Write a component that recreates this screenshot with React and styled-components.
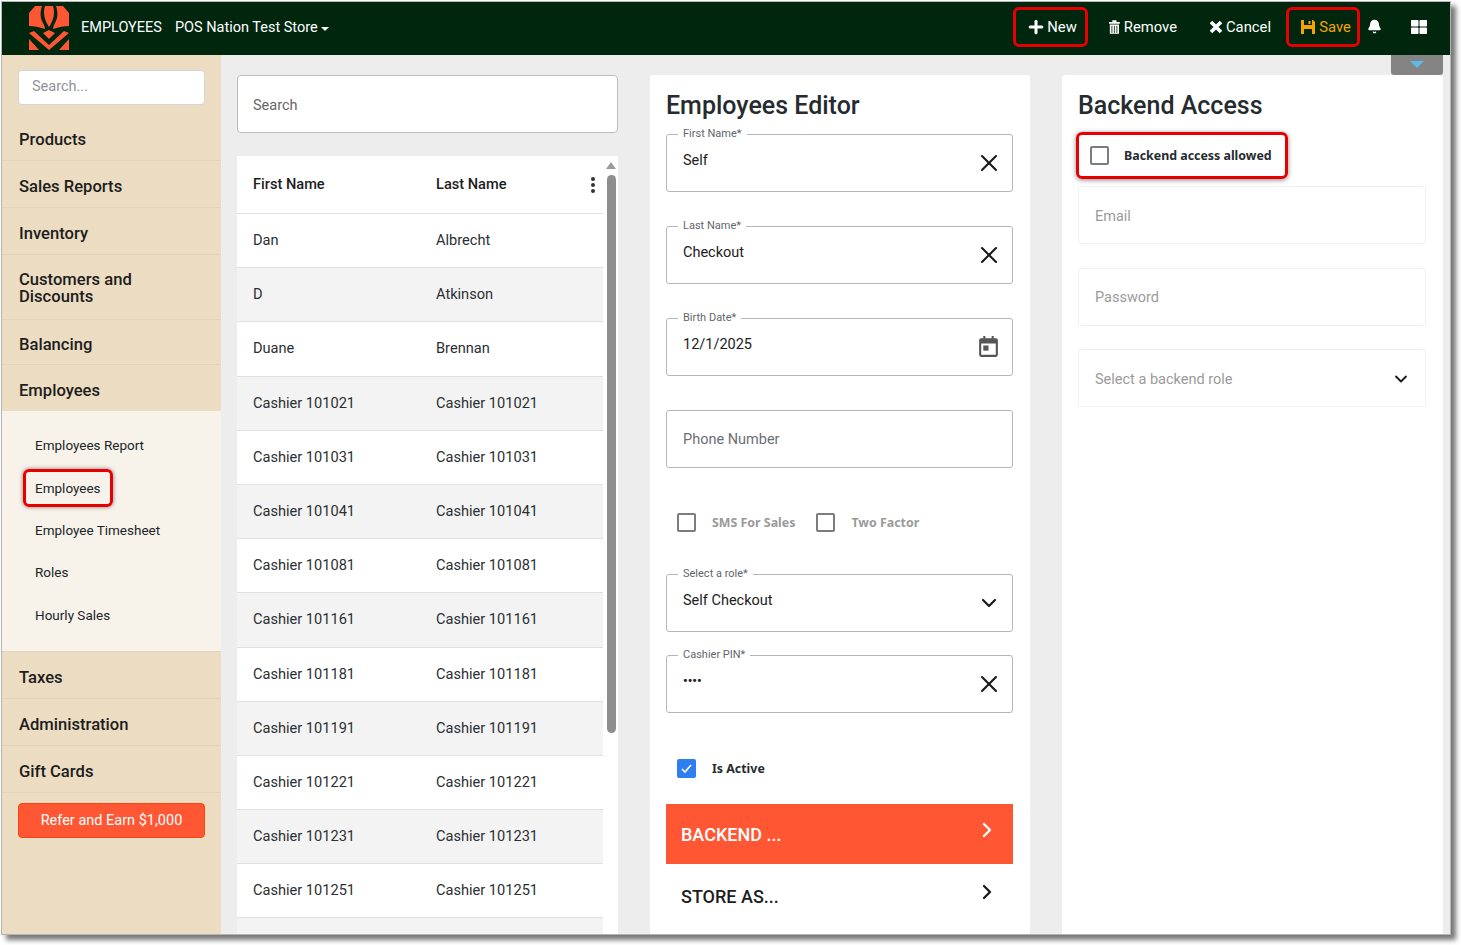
import React from "react";
import styled, { createGlobalStyle } from "styled-components";
import { X, ChevronDown, ChevronRight, Plus, Bell } from "lucide-react";
import { FaThLarge } from "react-icons/fa";

const GlobalStyle = createGlobalStyle`
  html, body {
    margin: 0;
    padding: 0;
    background: #fff;
    font-family: Roboto, "Liberation Sans", sans-serif;
    color: #212529;
  }
  * { box-sizing: border-box; }
`;

const Page = styled.div`
  width: 1461px;
  height: 945px;
  padding: 1px 10px 10px 1px;
  overflow: hidden;
`;

const Frame = styled.div`
  width: 1450px;
  height: 934px;
  border: 1px solid #b5b5b5;
  box-shadow: 5px 5px 5px #777;
  background: #ecedec;
  display: flex;
  flex-direction: column;
  overflow: hidden;
`;

const Header = styled.header`
  height: 53px;
  flex: none;
  background: #00260e;
  color: #fff;
  display: flex;
  align-items: center;
  padding: 0 0 4px 26px;
  font-size: 14.5px;
`;

const Logo = styled.svg`
  width: 42px;
  height: 44px;
  margin: 2px 11px 0 0;
`;

const HeaderTitle = styled.span`
  margin: 2px 13px 0 0;
`;

const StoreName = styled.span`
  margin-top: 2px;
  display: flex;
  align-items: center;
  gap: 3px;
  &::after {
    content: "";
    margin-top: 2px;
    border-left: 4px solid transparent;
    border-right: 4px solid transparent;
    border-top: 4px solid #fff;
  }
`;

const Actions = styled.div`
  margin-left: auto;
  display: flex;
  align-items: center;
  font-size: 14.8px;
`;

const ActionButton = styled.div`
  height: 40px;
  width: ${(p) => p.$w}px;
  margin-right: ${(p) => p.$mr || 0}px;
  padding: 1px 0 0 ${(p) => p.$pl || 0}px;
  display: flex;
  align-items: center;
  justify-content: center;
  gap: ${(p) => (p.$gap === undefined ? 4 : p.$gap)}px;
  color: ${(p) => (p.$orange ? "#f5a300" : "#fff")};
  border: 3px solid ${(p) => (p.$marked ? "#e60000" : "transparent")};
  border-radius: 6px;
`;

const IconButton = styled.div`
  display: flex;
  align-items: center;
  justify-content: center;
  width: ${(p) => p.$w}px;
`;

const Body = styled.div`
  flex: 1;
  display: flex;
  min-height: 0;
`;

const Sidebar = styled.aside`
  width: 219px;
  flex: none;
  background: #ebdcc2;
  padding-top: 15px;
`;

const SideSearch = styled.div`
  height: 35px;
  margin: 0 16px 9px 16px;
  padding: 0 0 3px 13px;
  display: flex;
  align-items: center;
  background: #fff;
  border: 1px solid #d5d5d5;
  border-radius: 4px;
  color: #8f949a;
  font-size: 14.5px;
`;

const NavItem = styled.div`
  height: ${(p) => p.$h || 47}px;
  padding: ${(p) => (p.$two ? "16px" : "5px")} 8px 0 17px;
  display: flex;
  align-items: ${(p) => (p.$two ? "flex-start" : "center")};
  font-size: 16.6px;
  line-height: 17px;
  font-weight: 500;
  color: #1d1d1d;
  border-bottom: ${(p) => (p.$flat ? "none" : "1px solid #e2d3b9")};
`;

const SubNav = styled.div`
  height: 241px;
  padding-top: 13px;
  background: #f7f3ea;
  border-bottom: 1px solid #e2d3b9;
`;

const SubItem = styled.div`
  height: 42.4px;
  padding-left: 33px;
  display: flex;
  align-items: center;
  font-size: 13.5px;
  color: #212529;
`;

const SubItemMark = styled.span`
  margin-left: -12px;
  padding: 0 9px;
  height: 38px;
  display: flex;
  align-items: center;
  border: 3px solid #e60000;
  border-radius: 6px;
  box-shadow: 0 0 4px #777;
`;

const ReferButton = styled.div`
  height: 35px;
  margin: 10px 16px 0;
  display: flex;
  align-items: center;
  justify-content: center;
  background: #ff5733;
  border: 1px solid #f4470f;
  border-radius: 4px;
  color: #fff;
  font-size: 14.5px;
`;

const Content = styled.main`
  flex: 1;
  display: flex;
  padding: 20px 8px 0 16px;
  position: relative;
`;

const ListColumn = styled.section`
  width: 381px;
  margin-right: 32px;
  display: flex;
  flex-direction: column;
  min-height: 0;
`;

const ListSearch = styled.div`
  height: 58px;
  flex: none;
  margin-bottom: 23px;
  padding: 2px 0 0 15px;
  display: flex;
  align-items: center;
  background: #fff;
  border: 1px solid #bdbdbd;
  border-radius: 4px;
  color: #666;
  font-size: 14.5px;
`;

const TableWrap = styled.div`
  flex: 1;
  display: flex;
  background: #fff;
  min-height: 0;
  overflow: hidden;
`;

const Table = styled.div`
  width: 366px;
  flex: none;
`;

const Row = styled.div`
  height: ${(p) => p.$h || 54.2}px;
  display: grid;
  grid-template-columns: 183px 1fr;
  align-items: center;
  padding: 0 0 1px 16px;
  font-size: 14.6px;
  font-weight: ${(p) => (p.$head ? 500 : 400)};
  color: ${(p) => (p.$head ? "#1d1d1d" : "#2b2f33")};
  background: ${(p) => (p.$alt ? "#f3f3f3" : "#fff")};
  border-bottom: 1px solid #e0e0e0;
  position: relative;
`;

const MenuDots = styled.svg`
  position: absolute;
  right: 6px;
  top: 20px;
  width: 8px;
  height: 18px;
`;

const ScrollTrack = styled.div`
  flex: 1;
  padding-top: 6px;
  display: flex;
  flex-direction: column;
  align-items: center;
  &::before {
    content: "";
    border-left: 5px solid transparent;
    border-right: 5px solid transparent;
    border-bottom: 7px solid #9a9a9a;
    margin-bottom: 6px;
  }
`;

const ScrollThumb = styled.div`
  width: 9px;
  height: 558px;
  margin-left: 1px;
  background: #8e8e8e;
  border-radius: 5px;
`;

const Card = styled.section`
  width: ${(p) => p.$w}px;
  margin-right: ${(p) => p.$mr || 0}px;
  background: #fff;
  border-radius: 3px 3px 0 0;
  padding: 16px 17px 0 16px;
  overflow: hidden;
`;

const CardTitle = styled.h2`
  margin: 0 0 14px;
  height: 29px;
  font-size: 25px;
  line-height: 29px;
  font-weight: 500;
  color: #262b30;
`;

const Field = styled.div`
  position: relative;
  height: 58px;
  margin-bottom: ${(p) => p.$mb}px;
  padding: 17px 16px 0;
  border: 1px solid #b4b6b8;
  border-radius: 3px;
  font-size: 14.5px;
  color: #212121;
  display: flex;
  justify-content: space-between;
`;

const FloatLabel = styled.label`
  position: absolute;
  left: 11px;
  top: -8px;
  padding: 0 5px;
  background: #fff;
  font-size: 11px;
  line-height: 13px;
  color: #62666b;
`;

const Placeholder = styled.span`
  margin-top: 3px;
  color: #6b6f74;
`;

const FieldIcon = styled.span`
  width: 28px;
  height: 22px;
  margin-right: -7px;
  display: flex;
  align-items: center;
  justify-content: center;
`;

const CalendarSvg = styled.svg`
  width: 25px;
  height: 25px;
  margin: -2px 2px 0 0;
`;

const PinDots = styled.span`
  margin-top: 3px;
  font-size: 13px;
  font-weight: 700;
  line-height: 10px;
`;

const CheckRow = styled.div`
  height: ${(p) => p.$h}px;
  margin-bottom: ${(p) => p.$mb}px;
  padding-left: 11px;
  display: flex;
  align-items: center;
`;

const Box = styled.span`
  width: 19px;
  height: 19px;
  flex: none;
  border: 2px solid ${(p) => (p.$checked ? "#2f7ef0" : "#7d7d7d")};
  border-radius: 2px;
  background: ${(p) => (p.$checked ? "#2f7ef0" : "#fff")};
  display: flex;
  align-items: center;
  justify-content: center;
`;

const CheckLabel = styled.span`
  margin-left: ${(p) => p.$ml || 16}px;
  margin-right: ${(p) => p.$mr || 0}px;
  font-family: "Noto Sans", Roboto, sans-serif;
  font-size: 12.4px;
  font-weight: 700;
  color: ${(p) => (p.$muted ? "#9a9a9a" : "#262b30")};
`;

const Accordion = styled.div`
  height: ${(p) => (p.$active ? 60 : 64)}px;
  padding: 0 21px 0 15px;
  display: flex;
  align-items: center;
  justify-content: space-between;
  background: ${(p) => (p.$active ? "#ff5733" : "#fff")};
  color: ${(p) => (p.$active ? "#fff" : "#1d1d1d")};
  font-size: 18px;
  font-weight: 500;
  svg { margin: -8px -7px 0 0; }
`;

const BackendMark = styled.div`
  width: 212px;
  height: 47px;
  margin: -2px 0 7px -2px;
  padding-left: 11px;
  display: flex;
  align-items: center;
  border: 3px solid #e60000;
  border-radius: 6px;
  box-shadow: 0 1px 5px #888;
`;

const BackendField = styled.div`
  height: 58px;
  margin-bottom: 23.5px;
  padding: 2px 14px 0 16px;
  display: flex;
  align-items: center;
  justify-content: space-between;
  border: 1px solid #f0f0f0;
  border-radius: 3px;
  font-size: 14.5px;
  color: #9b9b9b;
`;

const PanelTab = styled.div`
  position: absolute;
  top: 0;
  right: 8px;
  width: 52px;
  height: 20px;
  background: #848484;
  border-radius: 0 0 3px 3px;
  display: flex;
  justify-content: center;
  padding-top: 6px;
  &::after {
    content: "";
    height: 0;
    border-left: 7px solid transparent;
    border-right: 7px solid transparent;
    border-top: 7px solid #5bbce4;
  }
`;

const employees = [
  ["Dan", "Albrecht"],
  ["D", "Atkinson"],
  ["Duane", "Brennan"],
  ...[101021, 101031, 101041, 101081, 101161, 101181, 101191, 101221, 101231, 101251].map(
    (n) => [`Cashier ${n}`, `Cashier ${n}`]
  ),
];

const LogoMark = () => (
  <Logo viewBox="0 0 42 44">
    <path fill="#ff5733" d="M7 0h7c-2 6-2 12 1 17 1 2 2 4 2 6-6-2-11-3-16-3V7z" />
    <path fill="#ff5733" d="M17 0h8c2 6 1 14-4 21-5-7-6-15-4-21z" />
    <path fill="#ff5733" d="M28 0h7l6 7v13c-5 0-10 1-16 3 0-2 1-4 2-6 3-5 3-11 1-17z" />
    <path fill="#ff5733" d="M15 27l6-3 6 3-6 6z" />
    <path fill="#ff5733" d="M1 27l5-2 15 14 15-14 5 2-20 17z" />
    <path fill="#ff5733" d="M1 33l10 11H1zM41 33v11H31z" />
  </Logo>
);

const TrashIcon = () => (
  <svg width="13" height="16" viewBox="0 0 13 16">
    <path fill="#fff" d="M0 2h4V0h5v2h4v2H0zM1 5h11v11H1z" />
    <path stroke="#00260e" strokeWidth="1" d="M3.5 6.5V15M6.5 6.5V15M9.5 6.5V15" />
  </svg>
);

const CancelIcon = () => (
  <svg width="14" height="14" viewBox="0 0 14 14">
    <path stroke="#fff" strokeWidth="3.6" d="M2 2l10 10M12 2L2 12" />
  </svg>
);

const SaveIcon = () => (
  <svg width="14" height="14" viewBox="0 0 14 14">
    <path
      fill="#f5a300"
      fillRule="evenodd"
      d="M0 0h12l2 2v12H0zM3 0v5h8V0zM3 9v5h8V9z"
    />
    <path fill="#f5a300" d="M7.5 1h2v3h-2z" />
  </svg>
);

const CalendarIcon = () => (
  <CalendarSvg viewBox="0 0 24 24">
    <path
      fill="#555"
      fillRule="evenodd"
      d="M7 2v2H5a2 2 0 0 0-2 2v14a2 2 0 0 0 2 2h14a2 2 0 0 0 2-2V6a2 2 0 0 0-2-2h-2V2h-2v2H9V2zM5 9h14v11H5z"
    />
    <path fill="#555" d="M7 11h5v5H7z" />
  </CalendarSvg>
);

const Check = ({ checked }) => (
  <Box $checked={checked}>
    {checked && (
      <svg width="13" height="13" viewBox="0 0 13 13">
        <path d="M2 7l3 3 6-7" fill="none" stroke="#fff" strokeWidth="1.6" />
      </svg>
    )}
  </Box>
);

const TextField = ({ label, value, mb, icon }) => (
  <Field $mb={mb}>
    {label && <FloatLabel>{label}</FloatLabel>}
    {value}
    {icon && <FieldIcon>{icon}</FieldIcon>}
  </Field>
);

const clearIcon = <X size={28} color="#1a1a1a" strokeWidth={1.8} />;
const navAbove = ["Products", "Sales Reports", "Inventory"];
const navBelow = ["Taxes", "Administration", "Gift Cards"];
const subItems = ["Employees Report", "Employees", "Employee Timesheet", "Roles", "Hourly Sales"];

export default function App() {
  return (
    <Page>
      <GlobalStyle />
      <Frame>
        <Header>
          <LogoMark />
          <HeaderTitle>EMPLOYEES</HeaderTitle>
          <StoreName>POS Nation Test Store</StoreName>
          <Actions>
            <ActionButton $w={75} $mr={18} $gap={1} $pl={2} $marked>
              <Plus size={20} strokeWidth={3.6} />
              New
            </ActionButton>
            <ActionButton $w={74} $mr={25}>
              <TrashIcon />
              Remove
            </ActionButton>
            <ActionButton $w={70} $mr={11} $gap={3}>
              <CancelIcon />
              Cancel
            </ActionButton>
            <ActionButton $w={74} $pl={6} $orange $marked>
              <SaveIcon />
              Save
            </ActionButton>
            <IconButton $w={28}>
              <Bell size={15} fill="#fff" />
            </IconButton>
            <IconButton $w={62}>
              <FaThLarge size={16} />
            </IconButton>
          </Actions>
        </Header>
        <Body>
          <Sidebar>
            <SideSearch>Search...</SideSearch>
            {navAbove.map((n) => (
              <NavItem key={n}>{n}</NavItem>
            ))}
            <NavItem $h={65} $two>
              Customers and
              <br />
              Discounts
            </NavItem>
            <NavItem $h={45}>Balancing</NavItem>
            <NavItem $h={46} $flat>Employees</NavItem>
            <SubNav>
              {subItems.map((s) => (
                <SubItem key={s}>
                  {s === "Employees" ? <SubItemMark>{s}</SubItemMark> : s}
                </SubItem>
              ))}
            </SubNav>
            {navBelow.map((n) => (
              <NavItem key={n}>{n}</NavItem>
            ))}
            <ReferButton>Refer and Earn $1,000</ReferButton>
          </Sidebar>
          <Content>
            <ListColumn>
              <ListSearch>Search</ListSearch>
              <TableWrap>
                <Table>
                  <Row $head $h={58}>
                    <span>First Name</span>
                    <span>Last Name</span>
                    <MenuDots viewBox="0 0 8 18">
                      <circle cx="4" cy="3" r="2" fill="#333" />
                      <circle cx="4" cy="9" r="2" fill="#333" />
                      <circle cx="4" cy="15" r="2" fill="#333" />
                    </MenuDots>
                  </Row>
                  {employees.map(([first, last], i) => (
                    <Row key={first + i} $alt={i % 2 === 1}>
                      <span>{first}</span>
                      <span>{last}</span>
                    </Row>
                  ))}
                  <Row $alt />
                </Table>
                <ScrollTrack>
                  <ScrollThumb />
                </ScrollTrack>
              </TableWrap>
            </ListColumn>
            <Card $w={380} $mr={32}>
              <CardTitle>Employees Editor</CardTitle>
              <TextField label="First Name*" value="Self" mb={34} icon={clearIcon} />
              <TextField label="Last Name*" value="Checkout" mb={34} icon={clearIcon} />
              <TextField label="Birth Date*" value="12/1/2025" mb={34} icon={<CalendarIcon />} />
              <TextField value={<Placeholder>Phone Number</Placeholder>} mb={22} />
              <CheckRow $h={64} $mb={20}>
                <Check />
                <CheckLabel $muted $mr={21}>SMS For Sales</CheckLabel>
                <Check />
                <CheckLabel $muted>Two Factor</CheckLabel>
              </CheckRow>
              <TextField
                label="Select a role*"
                value="Self Checkout"
                mb={23}
                icon={<ChevronDown size={24} color="#1a1a1a" strokeWidth={2.2} />}
              />
              <TextField
                label="Cashier PIN*"
                value={<PinDots>••••</PinDots>}
                mb={32}
                icon={clearIcon}
              />
              <CheckRow $h={46} $mb={13}>
                <Check checked />
                <CheckLabel>Is Active</CheckLabel>
              </CheckRow>
              <Accordion $active>
                BACKEND ...
                <ChevronRight size={24} strokeWidth={2.4} />
              </Accordion>
              <Accordion>
                STORE AS...
                <ChevronRight size={24} strokeWidth={2.4} />
              </Accordion>
            </Card>
            <Card $w={381}>
              <CardTitle>Backend Access</CardTitle>
              <BackendMark>
                <Check />
                <CheckLabel $ml={15}>Backend access allowed</CheckLabel>
              </BackendMark>
              <BackendField>Email</BackendField>
              <BackendField>Password</BackendField>
              <BackendField>
                Select a backend role
                <ChevronDown size={20} color="#1a1a1a" strokeWidth={2.2} />
              </BackendField>
            </Card>
            <PanelTab />
          </Content>
        </Body>
      </Frame>
    </Page>
  );
}
